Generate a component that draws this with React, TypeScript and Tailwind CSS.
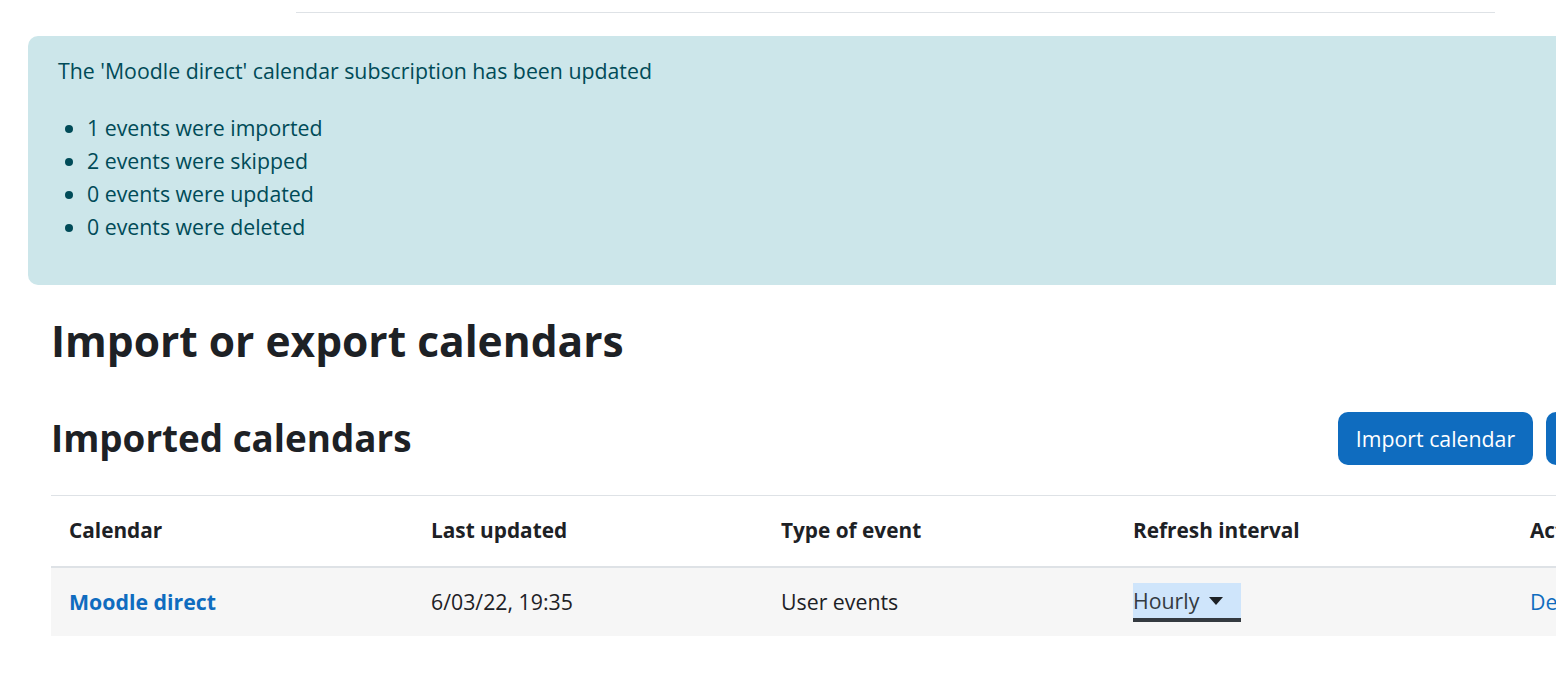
import React from "react";

const font = { fontFamily: '"Open Sans", "Noto Sans", sans-serif' };

export default function App() {
  return (
    <div
      className="w-[1556px] h-[691px] overflow-hidden bg-white text-[#1d2125]"
      style={font}
    >
      <div className="pt-[12px]">
        <div className="ml-[296px] w-[1199px] h-px bg-[#dee2e6]" />
      </div>

      <div className="mt-[23px] ml-[28px] w-[1600px] h-[249px] rounded-[10px] bg-[#cce6ea] text-[#004b58] px-[30px] pt-[17.5px] text-[21.3px] leading-[33px]">
        <p className="mb-[24.5px]">
          The 'Moodle direct' calendar subscription has been updated
        </p>
        <ul className="list-disc pl-[29px] marker:text-[#004b58]">
          <li>1 events were imported</li>
          <li>2 events were skipped</li>
          <li>0 events were updated</li>
          <li>0 events were deleted</li>
        </ul>
      </div>

      <div className="ml-[51px] w-[1690px]">
        <h2 className="mt-[29px] text-[42.5px] leading-[54px] font-bold">
          Import or export calendars
        </h2>

        <div className="mt-[44px] flex items-center justify-between h-[53px]">
          <h3 className="text-[36.8px] leading-[47px] font-bold">
            Imported calendars
          </h3>
          <div className="flex gap-[13px]">
            <button className="h-[53px] w-[195px] rounded-[10px] bg-[#0f6cbf] text-white text-[21.3px]">
              Import calendar
            </button>
            <button className="h-[53px] w-[195px] rounded-[10px] bg-[#0f6cbf] text-white text-[21.3px]">
              Export calendar
            </button>
          </div>
        </div>

        <div className="mt-[30px] border-t border-[#dee2e6]">
          <div className="grid grid-cols-[362px_350px_352px_397px_1fr] h-[72px] items-center font-bold text-[20.8px] border-b-2 border-[#dee2e6]">
            <div className="pl-[18px]">Calendar</div>
            <div className="pl-[18px]">Last updated</div>
            <div className="pl-[18px]">Type of event</div>
            <div className="pl-[18px]">Refresh interval</div>
            <div className="pl-[18px]">Actions</div>
          </div>
          <div className="grid grid-cols-[362px_350px_352px_397px_1fr] h-[68px] items-center bg-[#f6f6f6] text-[21.3px]">
            <div className="pl-[18px] font-bold text-[#0f6cbf]">Moodle direct</div>
            <div className="pl-[18px] text-[#1d2125]">6/03/22, 19:35</div>
            <div className="pl-[18px] text-[#1d2125]">User events</div>
            <div className="pl-[18px] pt-[1px]">
              <div className="inline-flex items-center h-[39px] w-[108px] bg-[#cfe5fb] border-b-[4px] border-[#343a40] text-[#343a40] text-[21.3px]">
                <span>Hourly</span>
                <svg width="14" height="8" viewBox="0 0 14 8" className="ml-[10px]">
                  <path d="M0 0 L14 0 L7 8 Z" fill="#1d2125" />
                </svg>
              </div>
            </div>
            <div className="pl-[18px] text-[#0f6cbf]">Delete</div>
          </div>
        </div>
      </div>
    </div>
  );
}
